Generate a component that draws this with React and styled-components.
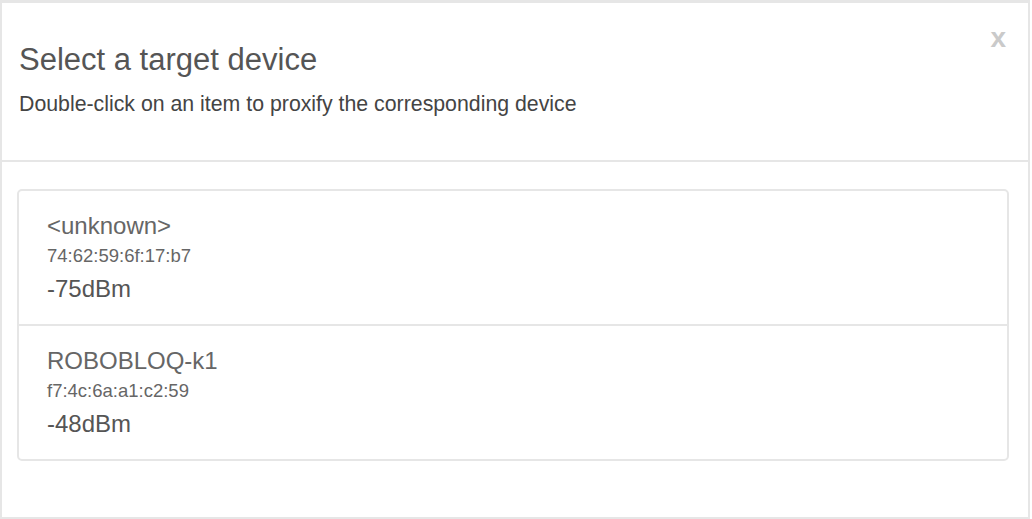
import React from 'react';
import styled, { createGlobalStyle } from 'styled-components';

const GlobalStyle = createGlobalStyle`
  html, body {
    margin: 0;
    padding: 0;
    background: #fff;
  }
  body {
    font-family: "Liberation Sans", Arial, sans-serif;
  }
`;

const Modal = styled.div`
  position: relative;
  box-sizing: border-box;
  width: 1030px;
  height: 519px;
  border: 2px solid #e6e6e6;
  border-top-width: 3px;
  background: #fff;
`;

const Header = styled.div`
  padding: 39px 20px 43px 17px;
  border-bottom: 2px solid #e6e6e6;
`;

const Title = styled.h4`
  margin: 0;
  font-size: 31px;
  line-height: 36px;
  font-weight: normal;
  color: #555;
`;

const Subtitle = styled.p`
  margin: 13px 0 0;
  font-size: 21.3px;
  line-height: 26px;
  color: #444;
`;

const Close = styled.button`
  position: absolute;
  top: 20px;
  right: 22px;
  padding: 0;
  border: 0;
  background: none;
  font-family: "Liberation Sans", Arial, sans-serif;
  font-size: 28px;
  font-weight: bold;
  line-height: 30px;
  color: #cacaca;
  cursor: pointer;
`;

const Body = styled.div`
  padding: 27px 19px 0 15px;
`;

const List = styled.ul`
  margin: 0;
  padding: 0;
  list-style: none;
  border: 2px solid #e6e6e6;
  border-radius: 5px;
`;

const Item = styled.li`
  padding: 20px 28px 17px;
  border-top: ${p => (p.first ? 'none' : '2px solid #e6e6e6')};
  cursor: pointer;
`;

const Name = styled.div`
  font-size: 24px;
  line-height: 30px;
  color: #666;
`;

const Mac = styled.div`
  font-size: 18.5px;
  line-height: 30px;
  color: #666;
`;

const Rssi = styled.div`
  font-size: 24px;
  line-height: 36px;
  color: #555;
`;

const devices = [
  { name: '<unknown>', mac: '74:62:59:6f:17:b7', rssi: -75 },
  { name: 'ROBOBLOQ-k1', mac: 'f7:4c:6a:a1:c2:59', rssi: -48 }
];

export default function App() {
  return (
    <>
      <GlobalStyle />
      <Modal>
        <Close>x</Close>
        <Header>
          <Title>Select a target device</Title>
          <Subtitle>Double-click on an item to proxify the corresponding device</Subtitle>
        </Header>
        <Body>
          <List>
            {devices.map((d, i) => (
              <Item key={d.mac} first={i === 0}>
                <Name>{d.name}</Name>
                <Mac>{d.mac}</Mac>
                <Rssi>{d.rssi}dBm</Rssi>
              </Item>
            ))}
          </List>
        </Body>
      </Modal>
    </>
  );
}
